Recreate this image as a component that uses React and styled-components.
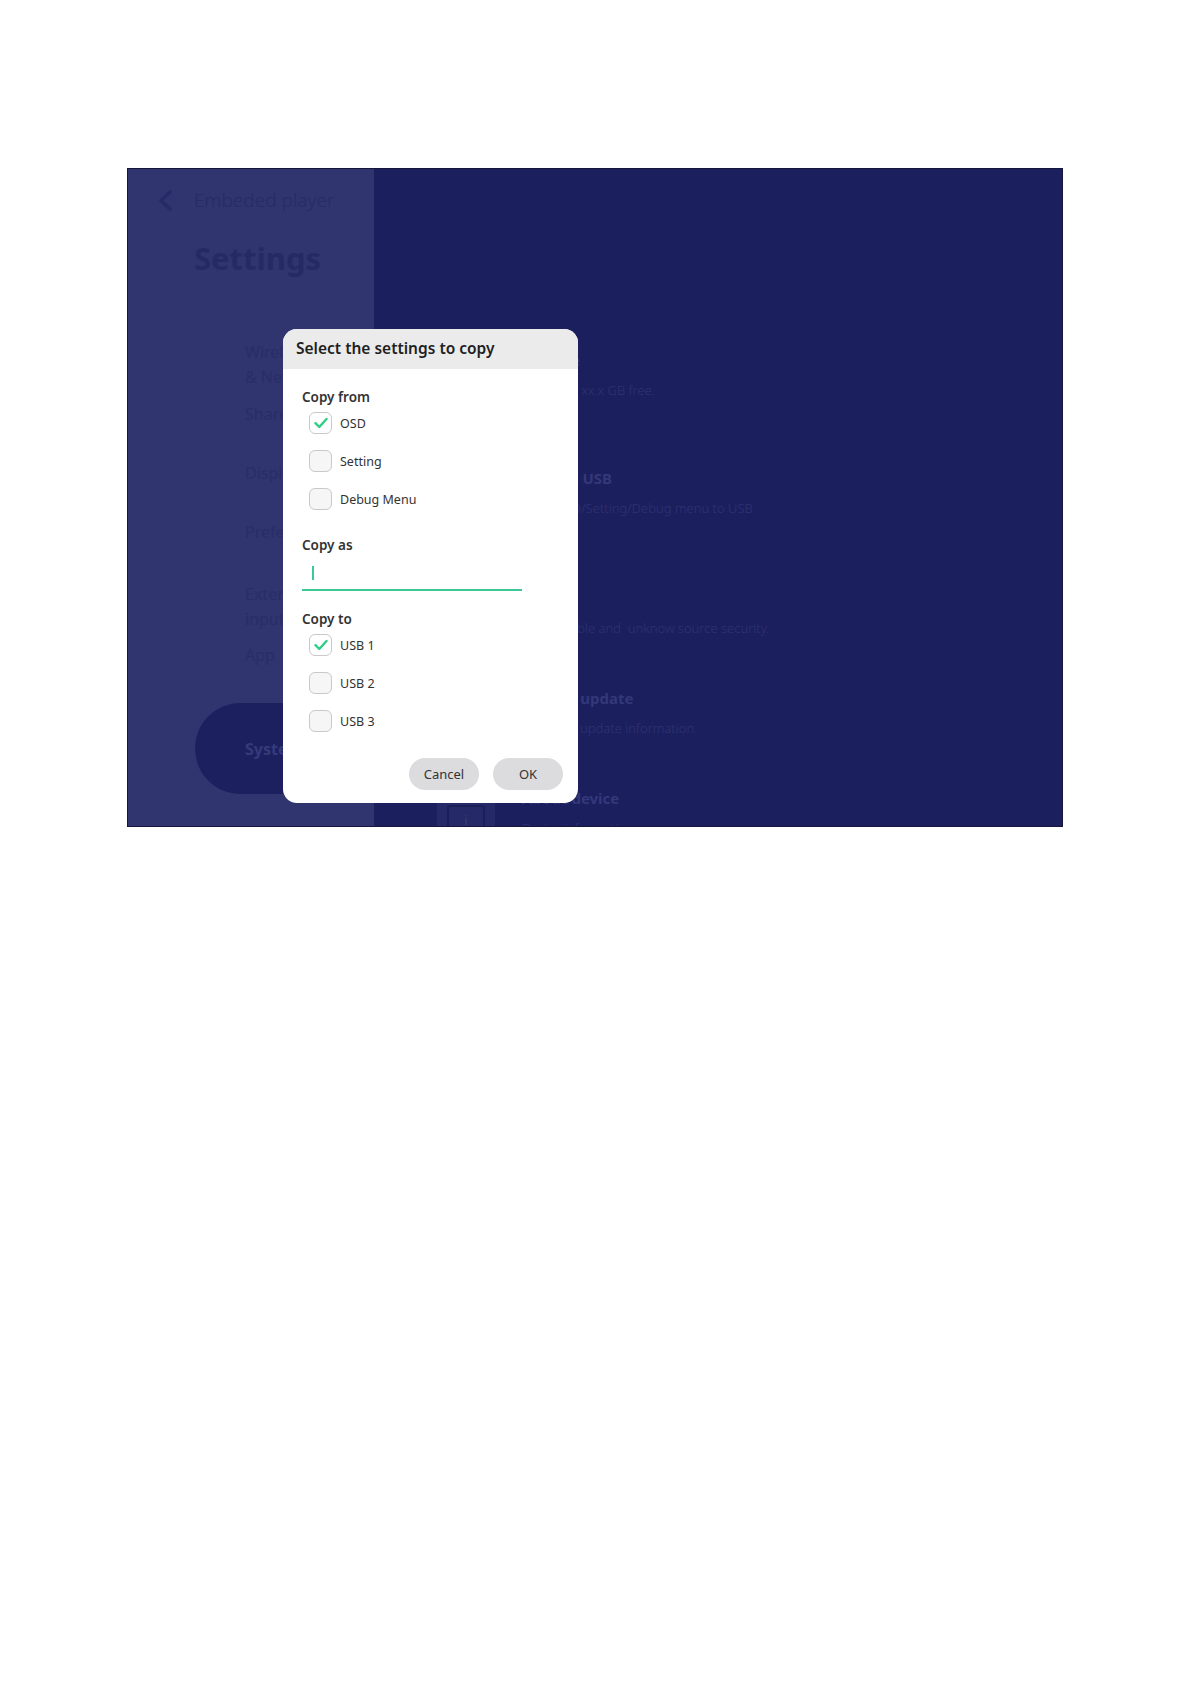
import React from 'react';
import styled, { createGlobalStyle } from 'styled-components';

const GlobalStyle = createGlobalStyle`
  body {
    margin: 0;
    background: #ffffff;
    font-family: 'Noto Sans', 'Open Sans', sans-serif;
  }
  * {
    box-sizing: border-box;
  }
`;

const Page = styled.div`
  padding: 168px 0 0 127px;
`;

const Frame = styled.div`
  position: relative;
  display: flex;
  width: 936px;
  height: 659px;
  border: 1px solid #15163a;
  overflow: hidden;
`;

const Sidebar = styled.aside`
  display: flex;
  flex-direction: column;
  flex-shrink: 0;
  width: 246px;
  padding-top: 16px;
  background: #30346f;
`;

const BackRow = styled.div`
  display: flex;
  align-items: center;
  gap: 21px;
  height: 30px;
  padding-left: 29px;
  color: #272b66;
  font-size: 19px;
  font-weight: 300;
`;

const PageTitle = styled.h1`
  margin: 23px 0 0 66px;
  font-size: 31px;
  line-height: 40px;
  font-weight: 700;
  color: #262a64;
`;

const NavList = styled.nav`
  display: flex;
  flex-direction: column;
  margin-top: 62px;
`;

const NavItem = styled.div`
  margin-top: ${({ $mt }) => $mt || 0}px;
  padding-left: 117px;
  font-size: 16px;
  line-height: 25px;
  white-space: nowrap;
  color: #292d68;
`;

const SelectedNav = styled.div`
  display: flex;
  align-items: center;
  height: 91px;
  margin: 35px 0 0 67px;
  padding-left: 50px;
  border-radius: 46px 0 0 46px;
  background: #1d205f;
  font-size: 16px;
  font-weight: 700;
  color: #363a7b;
`;

const Main = styled.main`
  flex: 1;
  padding: 176px 0 0 63px;
  background: #1c1f5e;
`;

const Row = styled.div`
  display: flex;
  align-items: center;
  gap: 27px;
  margin-top: ${({ $mt }) => $mt || 0}px;
`;

const IconBox = styled.div`
  display: flex;
  align-items: flex-end;
  justify-content: center;
  flex-shrink: 0;
  width: 58px;
  height: 58px;
  padding-bottom: 6px;
  border-radius: 14px;
  background: #252968;
`;

const IconInner = styled.div`
  display: flex;
  align-items: center;
  justify-content: center;
  width: 38px;
  height: 30px;
  border: 2px solid #1b1e58;
  border-radius: 3px;
  font-size: 12px;
  color: #3a3e80;
`;

const RowText = styled.div`
  display: flex;
  flex-direction: column;
  gap: 10px;
  white-space: pre;
`;

const RowTitle = styled.div`
  font-size: 15px;
  line-height: 22px;
  font-weight: 700;
  color: #33387a;
`;

const RowDesc = styled.div`
  font-size: 13px;
  line-height: 19px;
  font-weight: 300;
  color: #2f3372;
`;

const Dialog = styled.div`
  position: absolute;
  left: 155px;
  top: 160px;
  display: flex;
  flex-direction: column;
  width: 295px;
  height: 474px;
  border-radius: 14px;
  background: #ffffff;
  overflow: hidden;
`;

const DialogHeader = styled.div`
  display: flex;
  align-items: center;
  height: 40px;
  padding: 0 13px 2px;
  background: #ebebeb;
  font-size: 15.5px;
  font-weight: 600;
  color: #1f1f1f;
`;

const DialogBody = styled.div`
  display: flex;
  flex-direction: column;
  flex: 1;
  padding: 18px 15px 13px 19px;
`;

const SectionLabel = styled.div`
  margin-top: ${({ $mt }) => $mt || 0}px;
  font-size: 13.5px;
  line-height: 20px;
  font-weight: 600;
  color: #333333;
`;

const OptionList = styled.div`
  display: flex;
  flex-direction: column;
  gap: 16px;
  margin-top: 5px;
  padding-left: 7px;
`;

const Option = styled.label`
  display: flex;
  align-items: center;
  gap: 8px;
  height: 22px;
  font-size: 12.5px;
  color: #333333;
`;

const Box = styled.span`
  display: flex;
  align-items: center;
  justify-content: center;
  width: 23px;
  height: 22px;
  border: 1.5px solid #c9c9c9;
  border-radius: 6px;
  background: ${({ $checked }) => ($checked ? '#ffffff' : '#f6f6f6')};
`;

const TextField = styled.div`
  display: flex;
  align-items: center;
  width: 220px;
  height: 36px;
  padding-left: 10px;
  border-bottom: 2px solid #3cc996;
`;

const Caret = styled.span`
  width: 2px;
  height: 14px;
  margin-top: 2px;
  background: #3cc996;
`;

const Actions = styled.div`
  display: flex;
  justify-content: flex-end;
  gap: 14px;
  margin-top: auto;
`;

const Button = styled.button`
  width: 70px;
  height: 32px;
  border: none;
  border-radius: 16px;
  background: #dcdcdf;
  font-family: inherit;
  font-size: 13px;
  color: #333333;
`;

const Check = () => (
  <svg width="14" height="12" viewBox="0 0 14 12">
    <polyline
      points="1.5,6.2 5.3,10 12.5,2"
      fill="none"
      stroke="#2fcf86"
      strokeWidth="2.4"
      strokeLinecap="round"
      strokeLinejoin="round"
    />
  </svg>
);

const Chevron = () => (
  <svg width="16" height="21" viewBox="0 0 16 21">
    <polyline
      points="13,2 4,10.5 13,19"
      fill="none"
      stroke="#262a66"
      strokeWidth="3.6"
      strokeLinecap="round"
      strokeLinejoin="round"
    />
  </svg>
);

const CheckOption = ({ label, checked }) => (
  <Option>
    <Box $checked={checked}>{checked && <Check />}</Box>
    {label}
  </Option>
);

const rows = [
  { title: 'Storage', desc: 'Storage :  xx.x GB free.', mt: 0 },
  { title: 'Copy to USB', desc: 'Copy OSD/Setting/Debug menu to USB', mt: 60 },
  { title: 'Lock', desc: 'Lock, enable and  unknow source security.', mt: 62 },
  { title: 'System update', desc: 'Show the update information.', mt: 42 },
  { title: 'About device', desc: 'Device information.', mt: 42 },
];

const App = () => (
  <Page>
    <GlobalStyle />
    <Frame>
      <Sidebar>
        <BackRow>
          <Chevron />
          Embeded player
        </BackRow>
        <PageTitle>Settings</PageTitle>
        <NavList>
          <NavItem>
            Wireless
            <br />& Network
          </NavItem>
          <NavItem $mt={12}>Share</NavItem>
          <NavItem $mt={34}>Display</NavItem>
          <NavItem $mt={34}>Preference</NavItem>
          <NavItem $mt={37}>
            External
            <br />
            input
          </NavItem>
          <NavItem $mt={11}>App</NavItem>
        </NavList>
        <SelectedNav>System</SelectedNav>
      </Sidebar>
      <Main>
        {rows.map((row) => (
          <Row key={row.title} $mt={row.mt}>
            <IconBox>
              <IconInner>i</IconInner>
            </IconBox>
            <RowText>
              <RowTitle>{row.title}</RowTitle>
              <RowDesc>{row.desc}</RowDesc>
            </RowText>
          </Row>
        ))}
      </Main>
      <Dialog>
        <DialogHeader>Select the settings to copy</DialogHeader>
        <DialogBody>
          <SectionLabel>Copy from</SectionLabel>
          <OptionList>
            <CheckOption label="OSD" checked />
            <CheckOption label="Setting" />
            <CheckOption label="Debug Menu" />
          </OptionList>
          <SectionLabel $mt={25}>Copy as</SectionLabel>
          <TextField>
            <Caret />
          </TextField>
          <SectionLabel $mt={18}>Copy to</SectionLabel>
          <OptionList>
            <CheckOption label="USB 1" checked />
            <CheckOption label="USB 2" />
            <CheckOption label="USB 3" />
          </OptionList>
          <Actions>
            <Button>Cancel</Button>
            <Button>OK</Button>
          </Actions>
        </DialogBody>
      </Dialog>
    </Frame>
  </Page>
);

export default App;
